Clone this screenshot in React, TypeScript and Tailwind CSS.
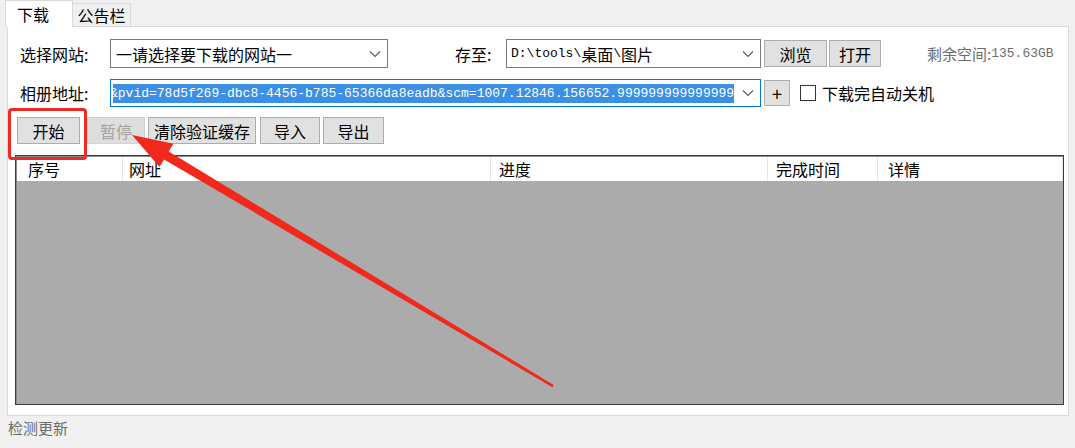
import React from 'react'

const cjk = { fontFamily: '"Noto Sans CJK SC", "Microsoft YaHei", sans-serif' }
const mono = '[font-family:"Liberation_Mono","DejaVu_Sans_Mono",monospace]'

const btn =
  'flex items-center justify-center border border-[#adadad] bg-[#e1e1e1] text-[16px] leading-none text-black'

function Chevron() {
  return (
    <svg width="12" height="8" viewBox="0 0 12 8" className="shrink-0">
      <polyline points="1,1.5 6,6.5 11,1.5" fill="none" stroke="#606060" strokeWidth="1.2" />
    </svg>
  )
}

function Select({ w, children }: { w: string; children: React.ReactNode }) {
  return (
    <div className={`${w} flex h-[29px] items-center border border-[#7a7a7a] bg-white pr-[6px] pl-[4px]`}>
      <div className="flex flex-1 items-center whitespace-nowrap">{children}</div>
      <Chevron />
    </div>
  )
}

function Arrow() {
  // 标注用的红色箭头，从右下拉到“暂停”按钮
  return (
    <svg width="1075" height="448" className="pointer-events-none absolute top-0 left-0">
      <polygon
        points="132,135 173.5,143.8 168.7,151.6 553.6,385 552.4,387.2 164.1,159.4 159.5,167"
        fill="#f2281d"
      />
    </svg>
  )
}

const cols = [
  { label: '序号', w: 'w-[106px] pl-[11px]' },
  { label: '网址', w: 'w-[368px] pl-[6px]' },
  { label: '进度', w: 'w-[277px] pl-[8px]' },
  { label: '完成时间', w: 'w-[110px] pl-[8px]' },
  { label: '详情', w: 'flex-1 pl-[10px]' },
]

export default function App() {
  return (
    <div style={cjk} className="relative h-[448px] w-[1075px] overflow-hidden bg-[#f0f0f0] text-black">
      {/* 标签页 */}
      <div className="flex h-[26px] items-end pl-[5px]">
        <div className="relative z-10 -mb-px flex h-[27px] w-[68px] items-center border border-b-0 border-[#d9d9d9] bg-white pl-[11px] text-[16px] leading-none">
          下载
        </div>
        <div className="flex h-[23px] w-[58px] items-center justify-center border border-b-0 border-l-0 border-[#d9d9d9] text-[16px] leading-none">
          公告栏
        </div>
      </div>

      <div className="ml-[7px] h-[390px] w-[1062px] border border-[#d9d9d9] bg-white">
        {/* 第一行 */}
        <div className="mt-[12px] flex h-[29px] items-center pl-[12px] text-[16px] leading-none">
          <span className="w-[90px]">选择网站:</span>
          <Select w="w-[278px]">
            <span className="pl-px">一请选择要下载的网站一</span>
          </Select>
          <span className="ml-[67px] w-[51px]">存至:</span>
          <Select w="w-[255px]">
            <span className={`${mono} text-[13px]`}>D:\tools\</span>
            <span>桌面</span>
            <span className={`${mono} text-[13px]`}>\</span>
            <span>图片</span>
          </Select>
          <button className={`${btn} ml-[3px] h-[27px] w-[63px]`}>浏览</button>
          <button className={`${btn} ml-[2px] h-[27px] w-[52px]`}>打开</button>
          <span className="ml-[46px] flex items-center text-[#6d6d6d]">
            <span className="text-[15px]">剩余空间:</span>
            <span className={`${mono} text-[13px]`}>135.63GB</span>
          </span>
        </div>

        {/* 第二行 */}
        <div className="mt-[11px] flex h-[28px] items-center pl-[12px] text-[16px] leading-none">
          <span className="w-[90px]">相册地址:</span>
          <div className="flex h-[28px] w-[651px] items-center border border-[#0078d7] bg-white pr-[6px] pl-[2px]">
            <div className="flex h-[19px] w-[621px] items-center overflow-hidden bg-[#3b8fe5]">
              <span className={`${mono} -ml-[3px] text-[13px] leading-[19px] whitespace-nowrap text-white`}>
                &amp;pvid=78d5f269-dbc8-4456-b785-65366da8eadb&amp;scm=1007.12846.156652.999999999999999
              </span>
            </div>
            <div className="ml-auto">
              <Chevron />
            </div>
          </div>
          <button className={`${btn} ml-[3px] h-[26px] w-[26px] text-[18px]`}>+</button>
          <span className="ml-[10px] h-[16px] w-[16px] border border-[#333] bg-white" />
          <span className="ml-[6px]">下载完自动关机</span>
        </div>

        {/* 按钮行 */}
        <div className="mt-[10px] flex h-[27px] items-center pl-[9px]">
          <button className={`${btn} h-[27px] w-[63px]`}>开始</button>
          <button className="ml-[7px] flex h-[27px] w-[58px] items-center justify-center border border-[#d4d4d4] bg-[#dedede] text-[16px] leading-none text-[#a3a3a3]">
            暂停
          </button>
          <button className={`${btn} ml-[3px] h-[27px] w-[108px]`}>清除验证缓存</button>
          <button className={`${btn} ml-[4px] h-[27px] w-[60px]`}>导入</button>
          <button className={`${btn} ml-[3px] h-[27px] w-[61px]`}>导出</button>
        </div>

        {/* 列表 */}
        <div className="mt-[11px] ml-[7px] flex h-[250px] w-[1049px] flex-col border border-[#3c3c3c] bg-[#ababab]">
          <div className="flex h-[25px] border-t border-l border-[#8a8a8a] bg-white">
            {cols.map((c) => (
              <div
                key={c.label}
                className={`${c.w} flex items-center border-r border-[#e5e5e5] text-[16px] leading-none`}
              >
                {c.label}
              </div>
            ))}
          </div>
          <div className="flex-1 border-l border-[#8a8a8a]" />
        </div>
      </div>

      <div className="mt-[4px] pl-[8px] text-[15px] leading-none text-[#6d6d6d]">检测更新</div>

      {/* 红框 */}
      <div className="pointer-events-none absolute top-[108px] left-[8px] h-[52px] w-[79px] rounded-[4px] border-[3px] border-[#ee2a24]" />
      <Arrow />
    </div>
  )
}
